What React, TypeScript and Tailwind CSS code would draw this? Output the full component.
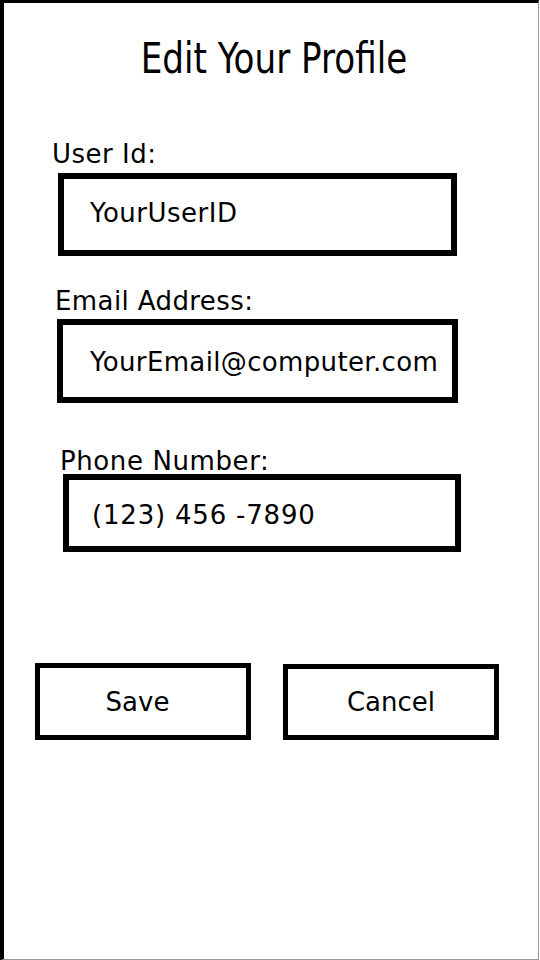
import React from "react";

const sans = "font-['DejaVu_Sans',sans-serif]";

export default function App() {
  return (
    <div className="w-[540px] h-[960px] bg-white">
      <div
        className={`w-[539px] h-[960px] bg-white border-l-4 border-t-[3px] border-r border-b border-l-black border-t-black border-r-[#9a9a9a] border-b-[#9a9a9a] flex flex-col text-black ${sans}`}
      >
        <h1 className="mt-[37px] h-[38px] leading-[38px] text-[38px] font-normal text-center pl-[6px] font-['DejaVu_Sans_Condensed','DejaVu_Sans',sans-serif] scale-y-110">
          Edit Your Profile
        </h1>

        <label className="mt-[64px] ml-[48px] h-[24px] leading-[24px] text-[26px] tracking-[0.5px]">
          User Id:
        </label>
        <div className="mt-[7px] ml-[54px] w-[399px] h-[83px] border-[6px] border-black pl-[26px] pt-[19px]">
          <div className="leading-[30px] text-[26px] tracking-[0.5px]">YourUserID</div>
        </div>

        <label className="mt-[33px] ml-[51px] h-[24px] leading-[24px] text-[26px] tracking-[0.4px]">
          Email Address:
        </label>
        <div className="mt-[6px] ml-[53px] w-[401px] h-[84px] border-[6px] border-black pl-[27px] pt-[22px]">
          <div className="leading-[30px] text-[26px] tracking-[0.35px] whitespace-nowrap">
            YourEmail@computer.com
          </div>
        </div>

        <label className="mt-[46px] ml-[56px] h-[24px] leading-[24px] text-[26px] tracking-[0.6px]">
          Phone Number:
        </label>
        <div className="mt-[1px] ml-[59px] w-[398px] h-[78px] border-[6px] border-black pl-[23px] pt-[20px]">
          <div className="leading-[30px] text-[26px] tracking-[0.8px] whitespace-nowrap">
            (123) 456 -7890
          </div>
        </div>

        <div className="mt-[111px] ml-[31px] flex items-start gap-[32px]">
          <button className="w-[216px] h-[77px] border-[5px] border-black flex items-center justify-center pr-[11px] text-[26px] leading-[30px]">
            Save
          </button>
          <button className="mt-[1px] w-[216px] h-[76px] border-[5px] border-black flex items-center justify-center text-[26px] leading-[30px]">
            Cancel
          </button>
        </div>
      </div>
    </div>
  );
}
